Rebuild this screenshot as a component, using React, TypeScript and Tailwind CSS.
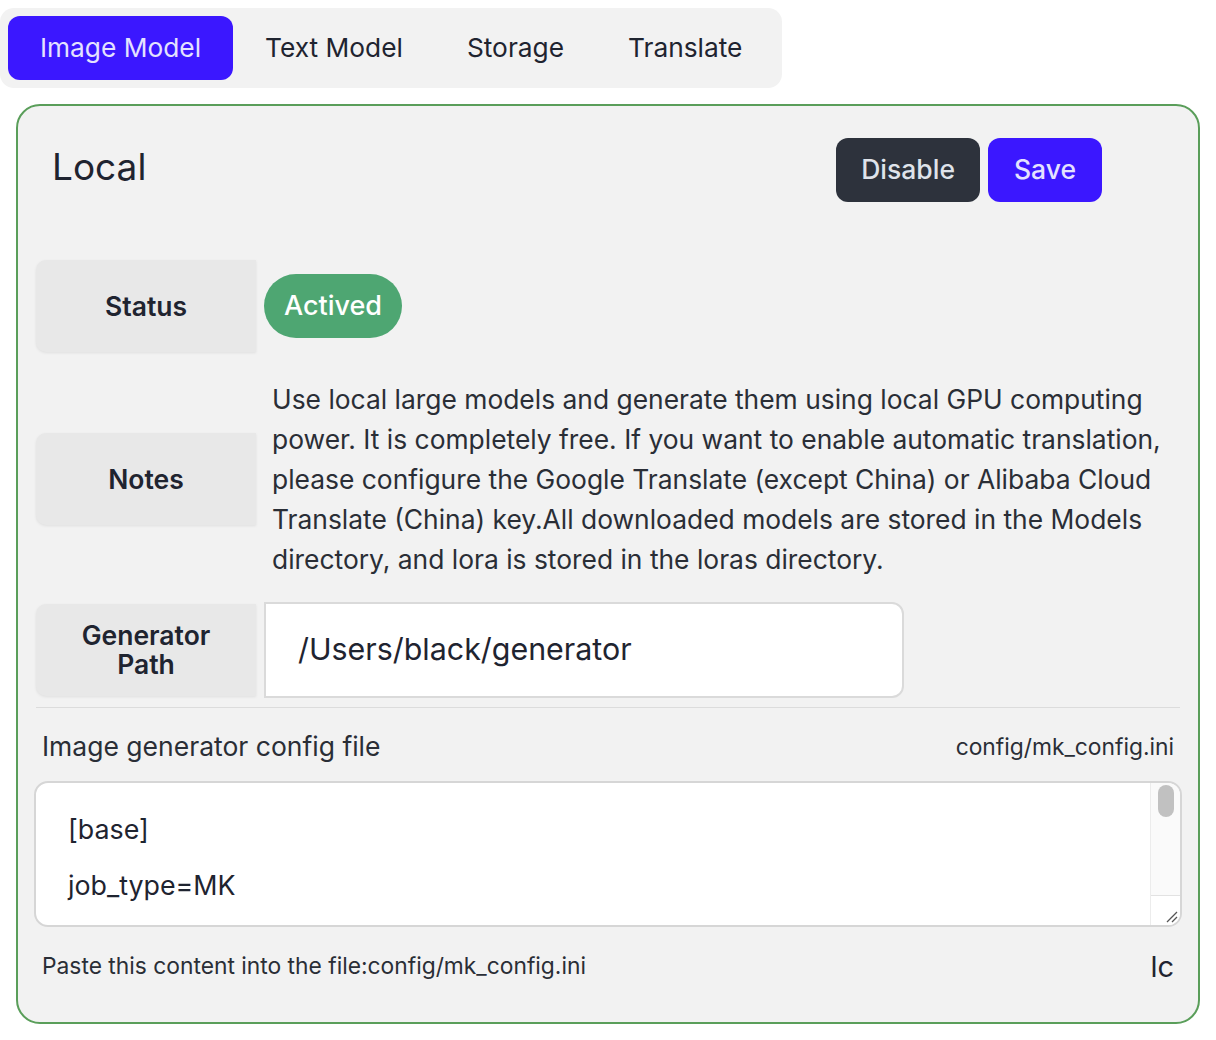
import { useState } from 'react';

const tabs = ['Image Model', 'Text Model', 'Storage', 'Translate'];

function Label({ children }: { children: React.ReactNode }) {
  return (
    <div className="w-[220px] h-[92px] shrink-0 flex items-center justify-center text-center bg-[#e8e8e8] rounded-l-[10px] shadow-[0_1px_3px_rgba(0,0,0,0.08)] text-[26.5px] font-semibold leading-[29px] text-[#1f2430]">
      {children}
    </div>
  );
}

export default function App() {
  const [active, setActive] = useState(0);

  return (
    <div className="w-[1216px] h-[1040px] bg-white pt-2 font-['Inter',sans-serif] text-[#1f2430]">
      {/* Tabs */}
      <div className="inline-flex p-2 bg-[#f2f2f2] rounded-[14px]">
        {tabs.map((t, i) => (
          <button
            key={t}
            onClick={() => setActive(i)}
            className={`h-16 px-8 rounded-[12px] text-[26.3px] ${i === active ? 'bg-[#3b17ff] text-[#e4e2ff]' : 'text-[#1f2430]'}`}
          >
            {t}
          </button>
        ))}
      </div>

      {/* Card */}
      <div className="mx-4 mt-4 h-[920px] border-2 border-[#5a9e5a] rounded-[24px] bg-[#f2f2f2] px-4">
        <div className="flex items-center justify-between pt-8 pl-[18px] pr-[80px]">
          <h2 className="text-[37px] leading-[44px] pb-[6px] text-[#1f2430]">Local</h2>
          <div className="flex gap-2">
            <button className="h-16 px-[25px] rounded-[12px] bg-[#2d323c] text-[#dfe3ea] text-[26.5px] font-medium">Disable</button>
            <button className="h-16 px-[26px] rounded-[12px] bg-[#3b17ff] text-[#e4e2ff] text-[26.5px] font-medium">Save</button>
          </div>
        </div>

        {/* Status */}
        <div className="flex items-center gap-2 mt-[58px] ml-[2px]">
          <Label>Status</Label>
          <span className="h-16 px-5 flex items-center rounded-full bg-[#4ea672] text-white text-[27px] font-medium">Actived</span>
        </div>

        {/* Notes */}
        <div className="flex items-center gap-4 mt-[27px] ml-[2px]">
          <Label>Notes</Label>
          <p className="text-[26.4px] leading-[40px] text-[#2a2e36] pr-2">
            Use local large models and generate them using local GPU computing power. It is completely free. If you want to enable automatic translation, please configure the Google Translate (except China) or Alibaba Cloud Translate (China) key.All downloaded models are stored in the Models directory, and lora is stored in the loras directory.
          </p>
        </div>

        {/* Generator Path */}
        <div className="flex items-center gap-2 mt-[23px] ml-[2px]">
          <Label>
            Generator
            <br />
            Path
          </Label>
          <div className="w-[640px] h-24 flex items-center pl-8 bg-white border-2 border-[#dadada] rounded-r-[12px] text-[30.4px] text-[#1f2430]">
            /Users/black/generator
          </div>
        </div>

        <div className="mt-[9px] h-px bg-[#dcdcdc] mx-[2px]" />

        {/* Config file */}
        <div className="flex items-center justify-between px-2 mt-[19px]">
          <span className="text-[26.5px] text-[#2a2e36]">Image generator config file</span>
          <span className="text-[22.8px] text-[#2a2e36]">config/mk_config.ini</span>
        </div>

        <div className="mt-[14px] h-[146px] flex bg-white border-2 border-[#d6d6d6] rounded-[14px] overflow-hidden">
          <div className="flex-1 pl-8 pt-[28px] text-[26.8px] text-[#1f2430]">
            <div className="leading-[36px]">[base]</div>
            <div className="mt-5 leading-[36px]">job_type=MK</div>
          </div>
          <div className="w-[30px] flex flex-col border-l border-[#ececec] bg-[#fafafa]">
            <div className="flex-1 pt-[2px] flex justify-center">
              <div className="w-4 h-8 rounded-full bg-[#c1c1c1]" />
            </div>
            <div className="h-[30px] border-t border-[#e2e2e2] bg-white flex items-end justify-end p-[2px]">
              <svg width="14" height="14" viewBox="0 0 14 14">
                <path d="M13 3 L3 13 M13 8 L8 13" stroke="#555" strokeWidth="1.3" fill="none" />
              </svg>
            </div>
          </div>
        </div>

        <div className="flex items-center justify-between px-2 mt-[18px]">
          <span className="text-[22.8px] text-[#2a2e36]">Paste this content into the file:config/mk_config.ini</span>
          <span className="text-[29px] text-[#1f2430]">lc</span>
        </div>
      </div>
    </div>
  );
}
